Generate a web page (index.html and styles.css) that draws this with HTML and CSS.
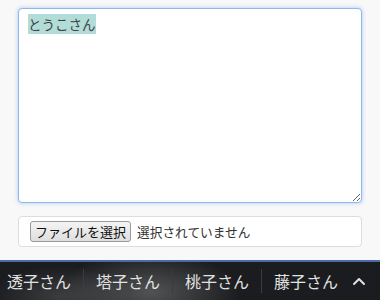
FILE: index.html
```html
<!DOCTYPE html>
<html lang="ja">
<head>
    <meta charset="UTF-8">
    <meta name="viewport" content="width=device-width, initial-scale=1.0">
    <title>メモ</title>
    <link rel="stylesheet" href="styles.css">
</head>
<body>
    <div class="page">
        <textarea id="memo" class="memo">とうこさん</textarea>

        <div class="file-box">
            <button class="file-button">ファイルを選択</button>
            <span class="file-status">選択されていません</span>
        </div>
    </div>

    <div class="tab-bar">
        <div class="tab">透子さん</div>
        <div class="tab">塔子さん</div>
        <div class="tab">桃子さん</div>
        <div class="tab">藤子さん</div>
        <div class="tab-toggle">
            <svg width="14" height="10" viewBox="0 0 14 10">
                <polyline points="2,8 7,3 12,8" fill="none" stroke="#e2e2e2" stroke-width="2" stroke-linecap="round" stroke-linejoin="round"/>
            </svg>
        </div>
    </div>

    <script>
        // select the name like the user just typed it
        const memo = document.getElementById('memo');
        memo.focus();
        memo.setSelectionRange(0, memo.value.length);
    </script>
</body>
</html>
```

FILE: styles.css
```css
body {
    font-family: "Noto Sans CJK JP", "Noto Sans", sans-serif;
    margin: 0;
    background: #f8f8f8;
    height: 300px;
    overflow: hidden;
    display: flex;
    flex-direction: column;
}
.page {
    padding: 8px 18px 0;
    flex: 1;
}
.memo {
    display: block;
    box-sizing: border-box;
    width: 344px;
    height: 195px;
    margin: 0;
    padding: 7px 9px;
    border: 1px solid #8fb8ee;
    border-radius: 4px;
    box-shadow: 0 0 4px rgba(120, 170, 235, 0.6);
    background: #fff;
    color: #444;
    font-family: "Noto Sans CJK JP", sans-serif;
    font-size: 13.5px;
    line-height: 16px;
    outline: none;
    resize: both;
}
.memo::selection {
    background: #b2dcd8;
    color: #444;
}
.file-box {
    box-sizing: border-box;
    margin-top: 13px;
    height: 31px;
    padding: 0 11px;
    display: flex;
    align-items: center;
    gap: 6px;
    background: #fff;
    border: 1px solid #ddd;
    border-radius: 4px;
}
.file-button {
    font-family: "Noto Sans CJK JP", sans-serif;
    font-size: 13px;
    line-height: 17px;
    padding: 1px 4px;
    color: #111;
    background: linear-gradient(#f4f4f4, #dedede);
    border: 1px solid #9a9a9a;
    border-radius: 3px;
}
.file-status {
    font-size: 12.7px;
    color: #333;
}
.tab-bar {
    height: 38px;
    display: flex;
    align-items: center;
    border-top: 2px solid #4a6ba3;
    background:
        radial-gradient(ellipse 90px 40px at 150px 30px, rgba(150, 150, 150, 0.45), transparent),
        radial-gradient(ellipse 70px 30px at 60px 34px, rgba(120, 120, 120, 0.35), transparent),
        #1a1c1f;
}
.tab {
    padding: 0 12px;
    font-size: 16px;
    color: #e2e2e2;
    border-left: 1px solid #3a3c40;
}
.tab:first-child {
    padding-left: 7px;
    border-left: none;
}
.tab-toggle {
    margin-left: 2px;
    display: flex;
    align-items: center;
}
```
